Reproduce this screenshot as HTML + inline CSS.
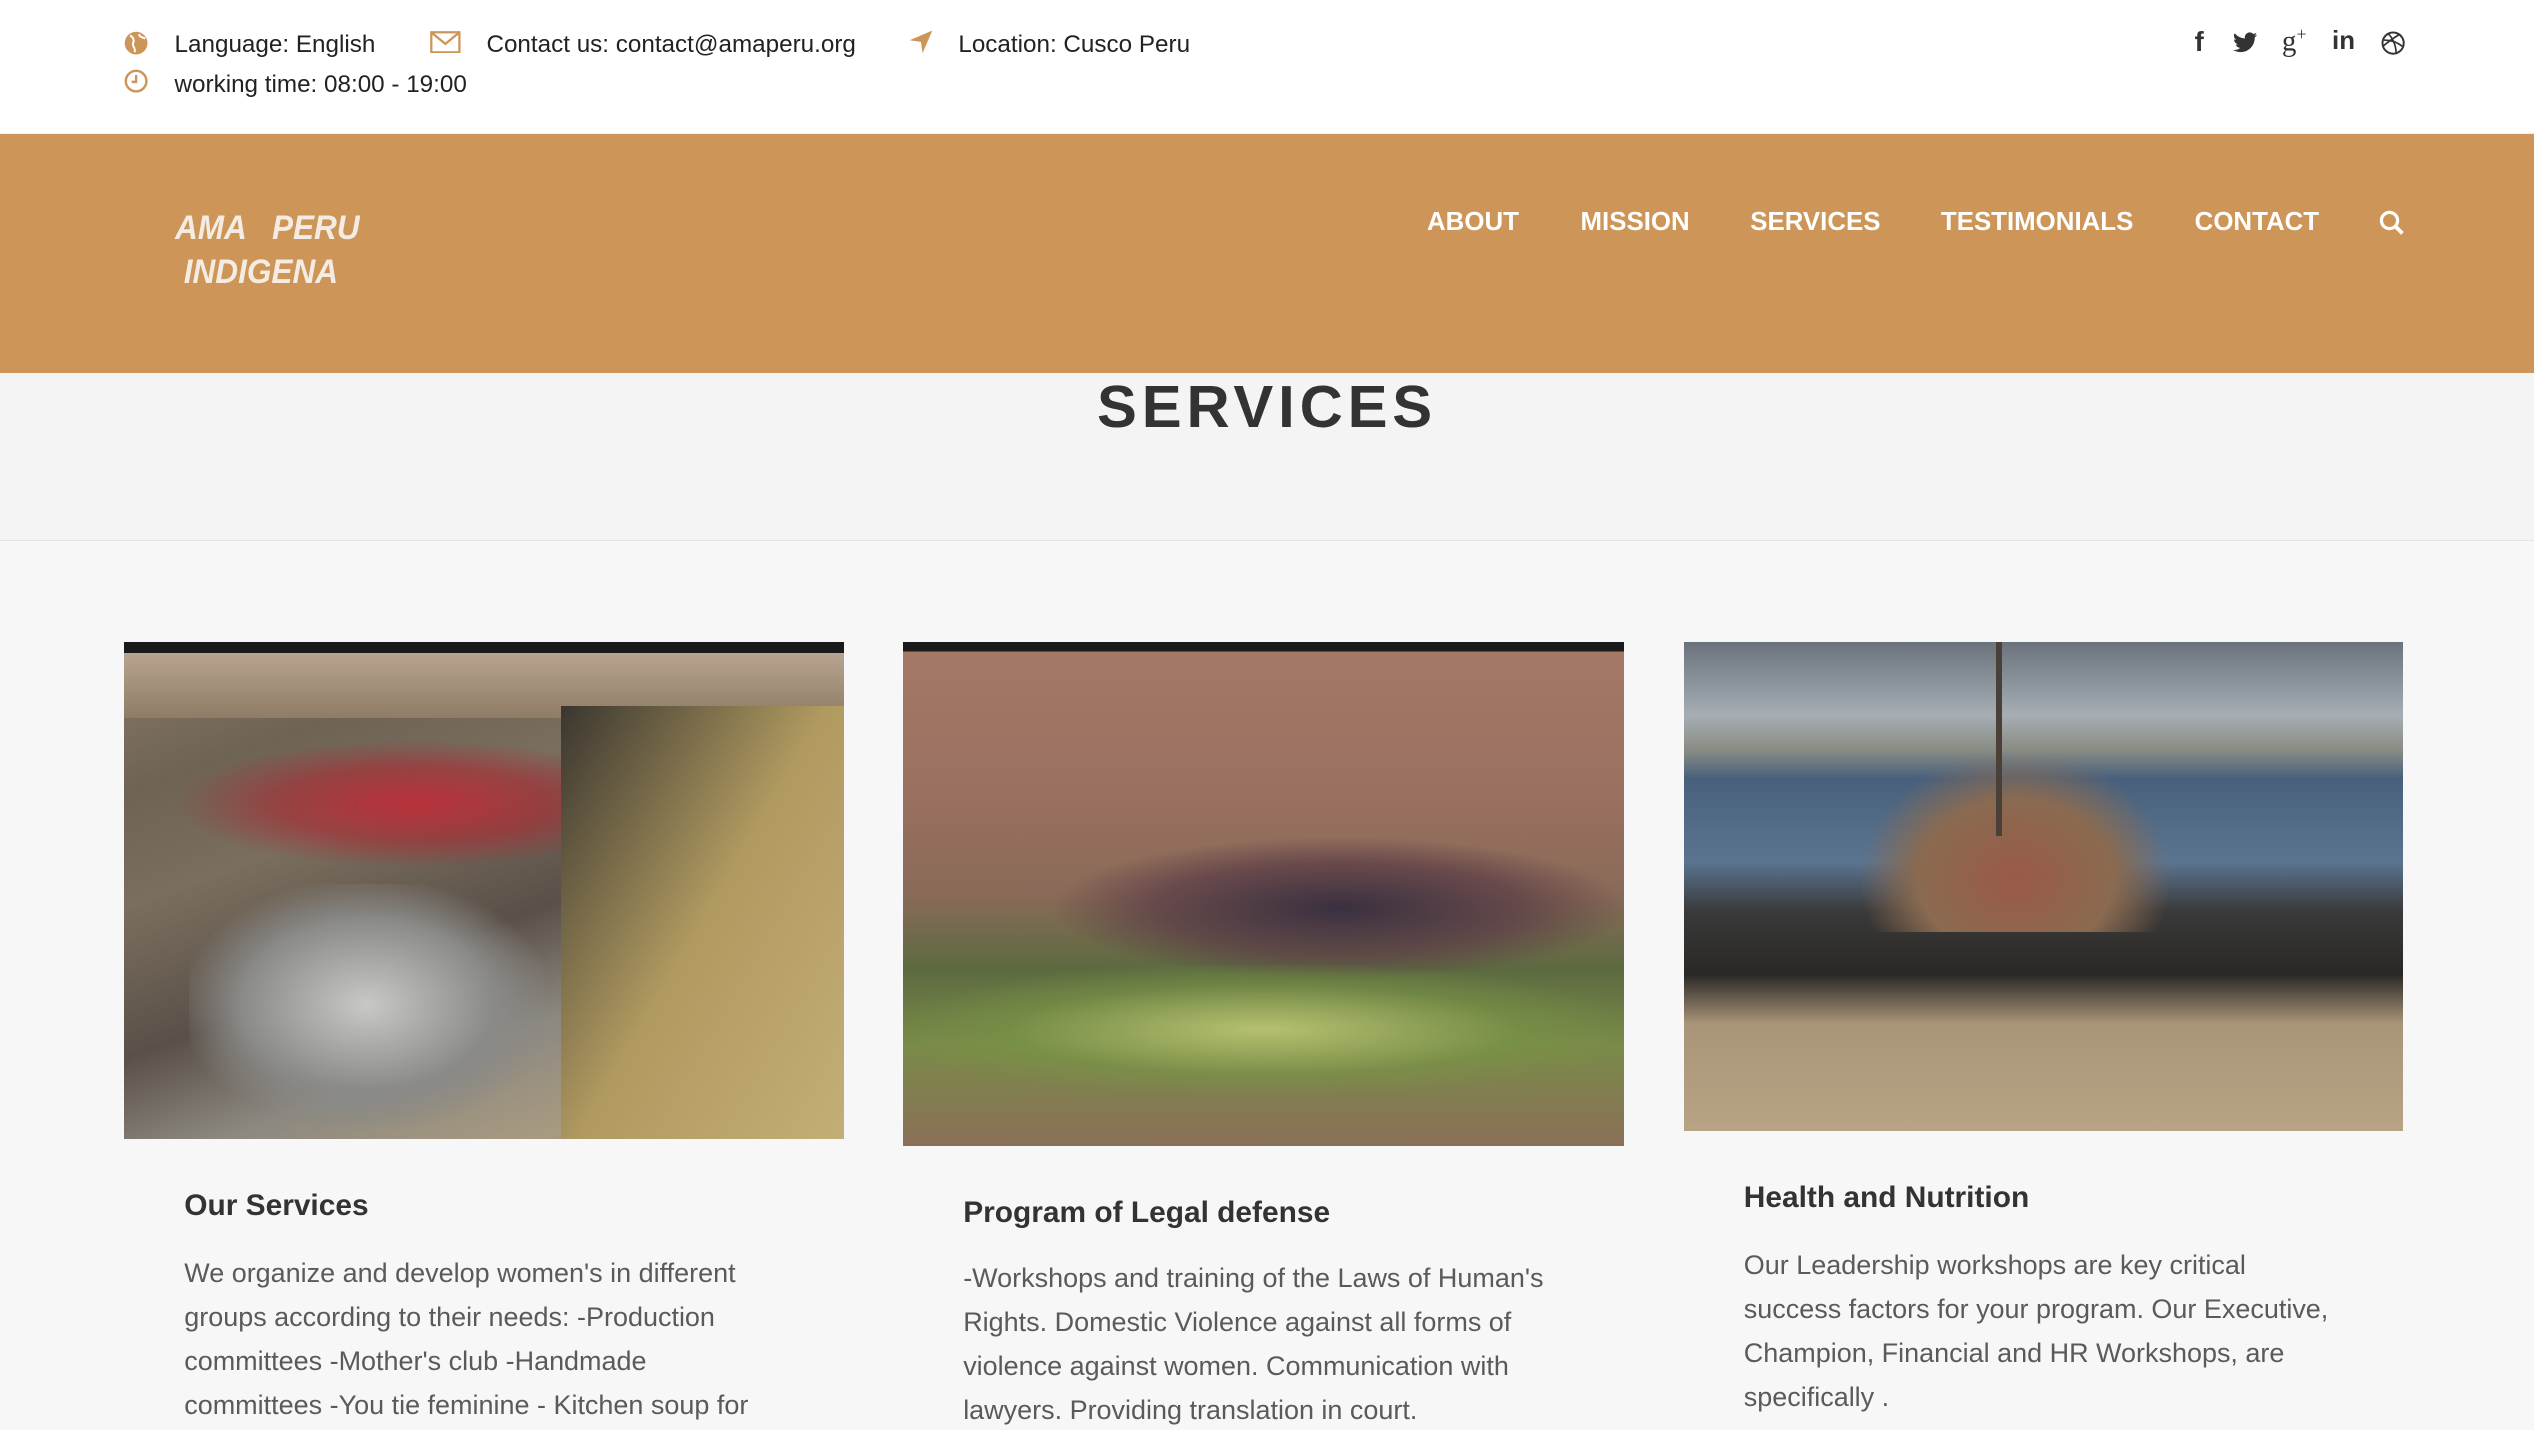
<!DOCTYPE html>
<html><head><meta charset="utf-8"><style>
html,body{margin:0;padding:0;}
body{width:2534px;height:1430px;overflow:hidden;background:#f7f7f7;font-family:"Liberation Sans",Arial,sans-serif;}
#w{zoom:1.6161;width:1568px;height:885px;position:relative;overflow:hidden;background:#f7f7f7;}
.a{position:absolute;white-space:nowrap;}
.top{position:absolute;left:0;top:0;width:1568px;height:82px;background:#fff;border-bottom:1px solid #eee;}
.tt{font-size:15px;color:#222;}
.hdr{position:absolute;left:0;top:83px;width:1568px;height:148px;background:#cd9558;}
.nav{font-size:16px;font-weight:bold;color:#fff;top:129px;}
.band{position:absolute;left:0;top:231px;width:1568px;height:103px;background:#f4f4f4;border-bottom:1px solid #e4e4e4;}
.h3{font-size:18.5px;font-weight:bold;color:#333;}
.p{font-size:16.7px;line-height:27.3px;color:#5a5a5a;white-space:normal;width:362px;}
.img{position:absolute;overflow:hidden;}
</style></head><body><div id="w">
<div class="top"></div>
<svg class="a" style="left:77px;top:19px" width="15" height="15" viewBox="0 0 16 16"><circle cx="8" cy="8" r="7.5" fill="#cd9558"/><path d="M4 3c2 1 3 3 2 5s2 3 1 6M10 2c0 2 2 2 4 3" stroke="#fff" stroke-width="1.3" fill="none"/></svg>
<div class="a tt" style="left:108px;top:19px">Language: English</div>
<svg class="a" style="left:266px;top:19px" width="19" height="14" viewBox="0 0 19 14"><rect x="0.8" y="0.8" width="17.4" height="12.4" fill="none" stroke="#cd9558" stroke-width="1.4"/><path d="M1 1l8.5 7L18 1" fill="none" stroke="#cd9558" stroke-width="1.4"/></svg>
<div class="a tt" style="left:301px;top:19px">Contact us: contact@amaperu.org</div>
<svg class="a" style="left:562px;top:18px" width="16" height="16" viewBox="0 0 16 16"><path d="M15 1L1 7l7 1 1 7z" fill="#cd9558"/></svg>
<div class="a tt" style="left:593px;top:19px">Location: Cusco Peru</div>
<svg class="a" style="left:77px;top:43px" width="15" height="15" viewBox="0 0 16 16"><circle cx="8" cy="8" r="6.8" fill="none" stroke="#cd9558" stroke-width="1.6"/><path d="M8 4v4.5H5" fill="none" stroke="#cd9558" stroke-width="1.6"/></svg>
<div class="a tt" style="left:108px;top:44px">working time: 08:00 - 19:00</div>
<div class="a" style="left:1358px;top:16px;font-size:17px;font-weight:bold;color:#333">f</div>
<svg class="a" style="left:1382px;top:20px" width="15" height="13" viewBox="0 0 24 20"><path d="M24 2.4a10 10 0 0 1-2.8.8A5 5 0 0 0 23.3.4a10 10 0 0 1-3.1 1.2A4.9 4.9 0 0 0 11.8 6 14 14 0 0 1 1.7.9a4.9 4.9 0 0 0 1.5 6.6 5 5 0 0 1-2.2-.6 4.9 4.9 0 0 0 3.9 4.9 5 5 0 0 1-2.2.1 4.9 4.9 0 0 0 4.6 3.4A10 10 0 0 1 0 17.3 14 14 0 0 0 7.5 19.5c9 0 14-7.5 14-14v-.6A10 10 0 0 0 24 2.4z" fill="#333"/></svg>
<div class="a" style="left:1412px;top:15px;font-size:18px;color:#333;font-family:'Liberation Serif',serif">g<sup style="font-size:11px">+</sup></div>
<div class="a" style="left:1443px;top:17px;font-size:16px;font-weight:bold;color:#333">in</div>
<svg class="a" style="left:1473px;top:19px" width="15" height="15" viewBox="0 0 16 16"><circle cx="8" cy="8" r="7" fill="none" stroke="#333" stroke-width="1.3"/><path d="M2 6c4 0 8 1 12 4M5 2c3 3 5 8 5 13M1.5 10c3-3 8-6 11-8" fill="none" stroke="#333" stroke-width="1.1"/></svg>
<div class="hdr"></div>
<div class="a" style="left:108px;top:128px;font-size:21px;font-weight:bold;font-style:italic;color:#f4ece2;line-height:27px;transform:scaleX(0.93);transform-origin:left">AMA &nbsp;&nbsp;PERU<br>&nbsp;INDIGENA</div>
<div class="a nav" style="left:883px">ABOUT</div>
<div class="a nav" style="left:978px">MISSION</div>
<div class="a nav" style="left:1083px">SERVICES</div>
<div class="a nav" style="left:1201px">TESTIMONIALS</div>
<div class="a nav" style="left:1358px">CONTACT</div>
<svg class="a" style="left:1472px;top:130px" width="16" height="16" viewBox="0 0 16 16"><circle cx="6.5" cy="6.5" r="5" fill="none" stroke="#fff" stroke-width="2"/><path d="M10 10l4.5 4.5" stroke="#fff" stroke-width="2.4"/></svg>
<div class="band"></div>
<div class="a" style="left:0;width:1568px;text-align:center;top:230px;font-size:37px;font-weight:bold;color:#333;letter-spacing:3px">SERVICES</div>

<div class="img" style="left:77px;top:397px;width:445px;height:308px;background:linear-gradient(160deg,#8a7a6a 0%,#6e6355 20%,#7a6e5e 35%,#5a5048 55%,#8c8880 70%,#a89a80 85%,#9a8a6a 100%)">
<div style="position:absolute;left:0;top:0;width:445px;height:7px;background:#1a1a1a"></div>
<div style="position:absolute;left:0;top:7px;width:445px;height:40px;background:linear-gradient(#b8a490,#8f7c66)"></div>
<div style="position:absolute;left:30px;top:60px;width:300px;height:80px;background:radial-gradient(ellipse,#b8303a 0%,rgba(170,40,50,.6) 40%,transparent 70%)"></div>
<div style="position:absolute;left:40px;top:150px;width:220px;height:150px;background:radial-gradient(ellipse,#c8c8c4 0%,#8a8a88 50%,transparent 75%)"></div>
<div style="position:absolute;left:270px;top:40px;width:175px;height:268px;background:linear-gradient(120deg,#3a3630,#b09a60 50%,#c4ae78)"></div>
</div>
<div class="img" style="left:559px;top:397px;width:446px;height:312px;background:linear-gradient(#1a1a1a 0,#1a1a1a 6px,#a57866 6px,#9a7060 30%,#8a6a58 50%,#5c6a40 65%,#7a8a48 80%,#8a7058 100%)">
<div style="position:absolute;left:90px;top:120px;width:360px;height:90px;background:radial-gradient(ellipse,#3a3040 0%,rgba(90,60,70,.7) 45%,transparent 70%)"></div>
<div style="position:absolute;left:0;top:200px;width:446px;height:80px;background:radial-gradient(ellipse,#b6c070 0%,rgba(120,150,70,.5) 50%,transparent 75%)"></div>
</div>
<div class="img" style="left:1042px;top:397px;width:445px;height:303px;background:linear-gradient(#6a737c 0%,#a6aeb4 15%,#8a8c84 22%,#48607c 28%,#5a7490 45%,#3a3a3a 55%,#2a2826 68%,#a89478 78%,#b8a484 100%)">
<div style="position:absolute;left:110px;top:70px;width:190px;height:110px;background:radial-gradient(ellipse at 50% 70%,#9a5a48 0%,#8a6a50 45%,transparent 72%)"></div>
<div style="position:absolute;left:193px;top:0;width:4px;height:120px;background:#4a4038"></div>
</div>

<div class="a h3" style="left:114px;top:736px">Our Services</div>
<div class="a p" style="left:114px;top:774px">We organize and develop women's in different groups according to their needs: -Production committees -Mother's club -Handmade committees -You tie feminine - Kitchen soup for</div>
<div class="a h3" style="left:596px;top:740px">Program of Legal defense</div>
<div class="a p" style="left:596px;top:777px">-Workshops and training of the Laws of Human's Rights. Domestic Violence against all forms of violence against women. Communication with lawyers. Providing translation in court.</div>
<div class="a h3" style="left:1079px;top:731px">Health and Nutrition</div>
<div class="a p" style="left:1079px;top:769px">Our Leadership workshops are key critical success factors for your program. Our Executive, Champion, Financial and HR Workshops, are specifically .</div>
</div></body></html>
